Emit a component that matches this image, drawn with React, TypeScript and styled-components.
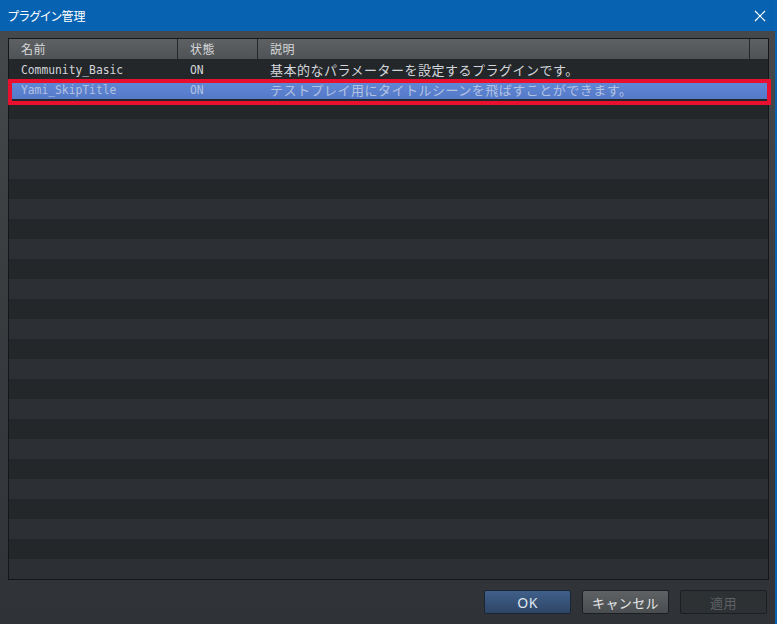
import React from 'react';
import styled, { createGlobalStyle, css } from 'styled-components';

const GlobalStyle = createGlobalStyle`
  html, body {
    margin: 0;
    padding: 0;
    background: #2f3337;
  }
`;

const Window = styled.div`
  width: 777px;
  height: 624px;
  display: flex;
  flex-direction: column;
  box-sizing: border-box;
  border-right: 2px solid #0a64b4;
  overflow: hidden;
`;

const TitleBar = styled.div`
  height: 31px;
  flex: none;
  display: flex;
  align-items: center;
  justify-content: space-between;
  padding: 0 9px 0 8px;
  background: #0763b2;
`;

const Title = styled.span`
  font-family: 'Noto Sans CJK JP', sans-serif;
  font-size: 12px;
  font-feature-settings: 'palt';
  color: #ffffff;
`;

const Body = styled.div`
  flex: 1;
  position: relative;
  display: flex;
  flex-direction: column;
  padding: 7px 0 0 8px;
  background: linear-gradient(#46494b, #3a3d40 40%, #2f3337);
`;

const Table = styled.div`
  width: 761px;
  height: 542px;
  box-sizing: border-box;
  border: 1px solid #14171a;
  display: flex;
  flex-direction: column;
  overflow: hidden;
`;

const HeaderRow = styled.div`
  display: flex;
  height: 20px;
  flex: none;
  background: linear-gradient(#5e6163, #505355);
`;

const HeaderCell = styled.div<{ $w: number; $last?: boolean }>`
  box-sizing: border-box;
  width: ${(p) => p.$w}px;
  flex: ${(p) => (p.$last ? '1' : 'none')};
  padding-left: 12px;
  border-right: ${(p) => (p.$last ? 'none' : '1px solid #25282a')};
  font-family: 'Noto Sans CJK JP', sans-serif;
  font-size: 12px;
  letter-spacing: 0.5px;
  line-height: 19px;
  color: #d6d8da;
`;

const Row = styled.div<{ $odd: boolean; $selected?: boolean }>`
  display: flex;
  height: 20px;
  flex: none;
  align-items: center;
  background: ${(p) => (p.$odd ? '#2c3034' : '#23272a')};
  color: #d3d6da;
  ${(p) =>
    p.$selected &&
    css`
      background: linear-gradient(#628ad7, #5479c8);
      color: #b3c2e2;
    `}
`;

const Cell = styled.div<{ $w: number; $jp?: boolean }>`
  box-sizing: border-box;
  width: ${(p) => p.$w}px;
  flex: none;
  padding-left: 12px;
  white-space: nowrap;
  ${(p) =>
    p.$jp &&
    css`
      font-family: 'Noto Sans CJK JP', sans-serif;
      font-size: 13px;
      letter-spacing: 0.5px;
    `}
`;

// narrow, tall monospace used for plugin names and status
const Mono = styled.span`
  display: inline-block;
  font-family: 'DejaVu Sans Mono', monospace;
  font-size: 13px;
  transform: scaleX(0.87);
  transform-origin: left center;
  padding-top: 2px;
`;

const Highlight = styled.div`
  position: absolute;
  left: 8px;
  top: 48px;
  width: 763px;
  height: 26px;
  box-sizing: border-box;
  border: 4px solid #e8102e;
  pointer-events: none;
`;

const Footer = styled.div`
  display: flex;
  justify-content: flex-end;
  gap: 11px;
  padding: 10px 8px 0 0;
`;

const Button = styled.button<{ $variant: 'primary' | 'normal' | 'disabled' }>`
  width: 87px;
  height: 24px;
  box-sizing: border-box;
  border-radius: 2px;
  font-family: 'Noto Sans CJK JP', sans-serif;
  font-size: 13px;
  letter-spacing: 0.4px;
  padding: 0;
  cursor: default;
  ${(p) =>
    p.$variant === 'primary'
      ? css`
          background: linear-gradient(#40608a, #2d4566);
          border: 1px solid #1b2433;
          color: #dfe5ee;
          font-family: 'Noto Sans', sans-serif;
          font-size: 14px;
        `
      : p.$variant === 'normal'
        ? css`
            background: linear-gradient(#5f6265, #4a4d50);
            border: 1px solid #1c1f21;
            color: #e4e6e8;
          `
        : css`
            background: #2d3134;
            border: 1px solid #1c1f22;
            color: #5d6165;
          `}
`;

const CloseIcon = () => (
  <svg width="12" height="12" viewBox="0 0 12 12">
    <path d="M1 1 L11 11 M11 1 L1 11" stroke="#ffffff" strokeWidth="1.2" />
  </svg>
);

const plugins = [
  { name: 'Community_Basic', status: 'ON', desc: '基本的なパラメーターを設定するプラグインです。' },
  { name: 'Yami_SkipTitle', status: 'ON', desc: 'テストプレイ用にタイトルシーンを飛ばすことができます。' },
];

const ROW_COUNT = 26;

const App: React.FunctionComponent = () => (
  <Window>
    <GlobalStyle />
    <TitleBar>
      <Title>プラグイン管理</Title>
      <CloseIcon />
    </TitleBar>
    <Body>
      <Table>
        <HeaderRow>
          <HeaderCell $w={169}>名前</HeaderCell>
          <HeaderCell $w={80}>状態</HeaderCell>
          <HeaderCell $w={492}>説明</HeaderCell>
          <HeaderCell $w={18} $last />
        </HeaderRow>
        {Array.from({ length: ROW_COUNT }, (_, i) => {
          const p = plugins[i];
          return (
            <Row key={i} $odd={i % 2 === 1} $selected={i === 1}>
              {p && (
                <>
                  <Cell $w={169}>
                    <Mono>{p.name}</Mono>
                  </Cell>
                  <Cell $w={80}>
                    <Mono>{p.status}</Mono>
                  </Cell>
                  <Cell $w={492} $jp>
                    {p.desc}
                  </Cell>
                </>
              )}
            </Row>
          );
        })}
      </Table>
      <Highlight />
      <Footer>
        <Button $variant="primary">OK</Button>
        <Button $variant="normal">キャンセル</Button>
        <Button $variant="disabled" disabled>
          適用
        </Button>
      </Footer>
    </Body>
  </Window>
);

export default App;
